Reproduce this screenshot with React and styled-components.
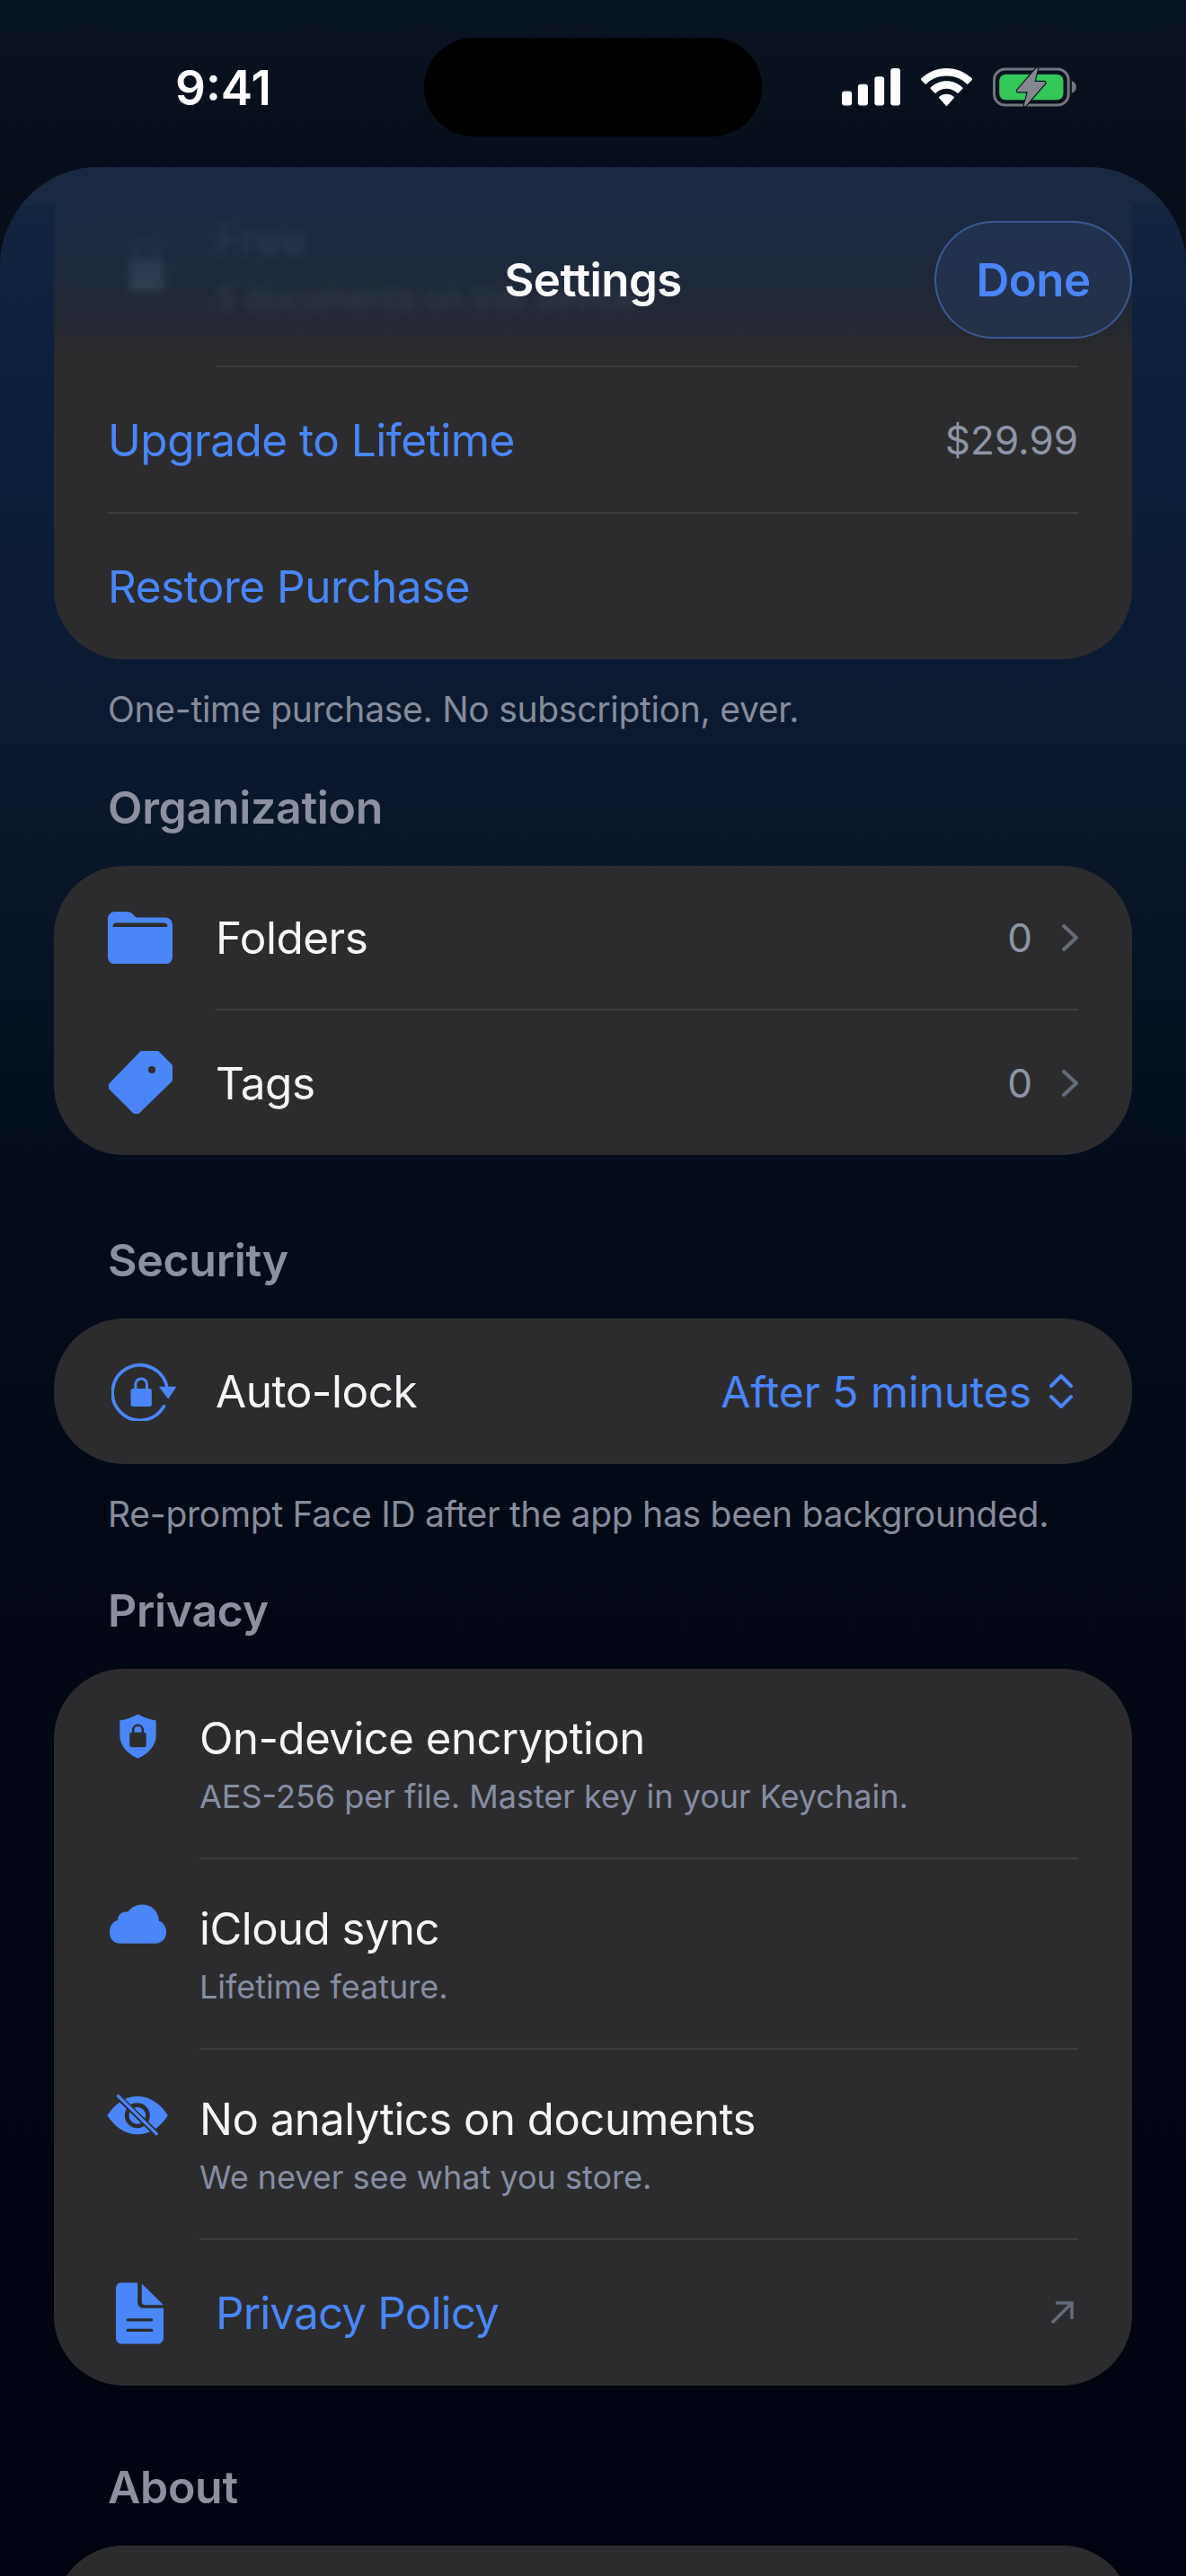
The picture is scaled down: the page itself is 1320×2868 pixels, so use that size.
import styled, { createGlobalStyle } from "styled-components"
import { Fragment } from "react"

const blue = "#4a86f8"
const card = "#2c2c2e"

const GlobalStyle = createGlobalStyle`
  html, body { margin: 0; padding: 0; background: #01040f; }
  * { box-sizing: border-box; }
`

const Page = styled.div`
  position: relative;
  width: 1320px;
  height: 2868px;
  overflow: hidden;
  display: flex;
  flex-direction: column;
  font-family: Inter, "Liberation Sans", sans-serif;
  color: #f5f6f8;
  background: linear-gradient(180deg, #0a1322 0%, #070e1a 6.5%, #060c18 100%);
`
const StatusBar = styled.div`
  position: relative;
  height: 186px;
  flex: none;
  padding: 0 122px 0 195px;
  display: flex;
  justify-content: space-between;
  align-items: flex-start;
`
const Clock = styled.div`
  font-size: 53px;
  font-weight: 600;
  line-height: 60px;
  margin-top: 68px;
  color: #fff;
`
const StatusIcons = styled.div`
  display: flex;
  align-items: center;
  gap: 23px;
  margin-top: 75px;
  svg { display: block; }
`
const Island = styled.div`
  position: absolute;
  left: 472px;
  top: 42px;
  width: 376px;
  height: 110px;
  border-radius: 55px;
  background: #000;
`
const Sheet = styled.div`
  position: relative;
  flex: 1;
  overflow: hidden;
  border-radius: 110px 110px 0 0;
  padding: 42px 60px 0;
  background: linear-gradient(180deg, #142540 0%, #0d1f3d 9%, #0c1b34 20%, #091527 30%, #040c1c 42%, #030814 60%, #01040e 100%);
`
const BlurLayer = styled.div`
  position: absolute;
  left: 60px;
  right: 60px;
  top: 0;
  height: 232px;
  backdrop-filter: blur(5px);
  background: linear-gradient(180deg, rgba(25, 40, 66, 1) 0%, rgba(26, 41, 66, 0.96) 25%, rgba(27, 40, 62, 0.86) 50%, rgba(32, 38, 50, 0.7) 75%, rgba(44, 44, 46, 0) 100%);
  mask-image: linear-gradient(180deg, #000 75%, transparent 100%);
`
const TopTint = styled.div`
  position: absolute;
  left: 0;
  right: 0;
  top: 0;
  height: 42px;
  background: linear-gradient(180deg, #182840, #192842);
`
const Header = styled.div`
  position: absolute;
  left: 0;
  right: 0;
  top: 60px;
  padding: 0 60px;
  display: grid;
  grid-template-columns: 1fr auto 1fr;
  align-items: center;
`
const HeaderTitle = styled.div`
  font-size: 51px;
  font-weight: 600;
  letter-spacing: -0.6px;
  color: #fff;
  grid-column: 2;
`
const DoneButton = styled.div`
  grid-column: 3;
  justify-self: end;
  width: 220px;
  height: 131px;
  border-radius: 66px;
  display: flex;
  align-items: center;
  justify-content: center;
  font-size: 51px;
  font-weight: 600;
  letter-spacing: -0.5px;
  color: ${blue};
  background: rgba(38, 56, 92, 0.55);
  border: 2px solid rgba(76, 124, 210, 0.55);
`
const Card = styled.div`
  background: ${card};
  border-radius: 78px;
  overflow: hidden;
`
const Row = styled.div`
  position: relative;
  height: ${p => p.$h}px;
  display: flex;
  align-items: center;
  padding: 0 60px;
`
const PlanRow = styled(Row)`
  padding-bottom: 48px;
`
const Divider = styled.div`
  height: 2px;
  margin-left: ${p => p.$inset}px;
  margin-right: 60px;
  background: #3e3e40;
`
const IconSlot = styled.div`
  width: ${p => p.$w || 120}px;
  margin-left: ${p => p.$shift || 0}px;
  flex: none;
  display: flex;
  align-items: center;
  svg { display: block; }
`
const RowLabel = styled.div`
  font-size: 49.5px;
  font-weight: 400;
  letter-spacing: ${p => p.$spacing || -0.5}px;
  color: ${p => (p.$link ? blue : "#f5f6f8")};
`
const RowRight = styled.div`
  margin-left: auto;
  display: flex;
  align-items: center;
  gap: ${p => p.$gap || 0}px;
  padding-right: ${p => p.$pad || 0}px;
  font-size: ${p => p.$size || 44}px;
  color: ${p => p.$color || "#8e95a6"};
  svg { display: block; }
`
const TallRow = styled.div`
  height: ${p => p.$h}px;
  display: flex;
  padding: 50px 60px 0;
`
const TallIcon = styled.div`
  width: 66px;
  height: 58px;
  margin-right: 36px;
  flex: none;
  display: flex;
  justify-content: center;
  svg { display: block; flex: none; }
`
const TallTitle = styled.div`
  font-size: 49px;
  line-height: 56px;
  letter-spacing: -0.45px;
  color: #f5f6f8;
`
const TallSub = styled.div`
  font-size: 36px;
  line-height: 44px;
  margin-top: 14px;
  color: #868ea3;
`
const Footnote = styled.div`
  font-size: 39px;
  line-height: 50px;
  letter-spacing: -0.27px;
  margin: 31px 0 0 60px;
  color: #878c9b;
`
const SectionHeading = styled.div`
  font-size: 50px;
  font-weight: 600;
  line-height: 60px;
  letter-spacing: -0.3px;
  margin: ${p => p.$gap}px 0 35px 60px;
  color: #8d90a0;
`
const LastCard = styled(Card)`
  height: 300px;
`

const Signal = () => (
  <svg width="65" height="42" viewBox="112 108 193 124" fill="#fff">
    <rect x="112" y="183" width="33" height="48" rx="9" />
    <rect x="165" y="160" width="33" height="71" rx="9" />
    <rect x="220" y="135" width="32" height="96" rx="9" />
    <rect x="273" y="108" width="32" height="123" rx="9" />
  </svg>
)

const Wifi = () => (
  <svg width="57" height="42" viewBox="375 105 172 127" fill="#fff">
    <path d="M461 105c33 0 63 13 86 35 1 1 1 3 0 4l-14 14c-1 1-3 1-4 0-18-18-42-27-68-27s-50 9-68 27c-1 1-3 1-4 0l-14-14c-1-1-1-3 0-4 23-22 53-35 86-35z" />
    <path d="M461 148c21 0 40 8 54 22 1 1 1 3 0 4l-14 14c-1 1-3 1-4 0-10-9-22-14-36-14s-26 5-36 14c-1 1-3 1-4 0l-14-14c-1-1-1-3 0-4 14-14 33-22 54-22z" />
    <path d="M461 192c10 0 18 3 25 9 1 1 1 3 0 4l-23 26c-1 1-3 1-4 0l-23-26c-1-1-1-3 0-4 7-6 15-9 25-9z" />
  </svg>
)

const Battery = () => (
  <svg width="93" height="44" viewBox="615 102 278 132">
    <rect x="619" y="108" width="248" height="120" rx="36" fill="none" stroke="#73767d" strokeWidth="9" />
    <rect x="636" y="125" width="214" height="86" rx="22" fill="#34c759" />
    <path d="M878 148c9 2 15 10 15 20s-6 18-15 20z" fill="#73767d" />
    <path d="M760 104 696 178c-2 3 0 6 3 6h32l-12 44c-1 4 3 5 5 3l65-75c2-3 0-6-3-6h-32l11-44c1-3-3-4-5-0z" fill="#85878e" stroke="#0a1220" strokeWidth="7" paintOrder="stroke" />
  </svg>
)

const LockIcon = () => (
  <svg width="40" height="60" viewBox="0 0 40 60">
    <path d="M9 24v-9a11 11 0 0 1 22 0v9" fill="none" stroke="#8f98ad" strokeWidth="5" />
    <rect x="0" y="23" width="40" height="37" rx="6" fill="#8f98ad" />
  </svg>
)

const FolderIcon = () => (
  <svg width="72" height="58" viewBox="0 0 72 58">
    <path d="M0 8a8 8 0 0 1 8-8h13c3 0 5 1 7 3l2 2c1 1 2 1.500 4 1.500h30a8 8 0 0 1 8 8v36a8 8 0 0 1-8 8H8a8 8 0 0 1-8-8z" fill={blue} />
    <path d="M5.500 17c0-3 1.500-4.500 4-4.500h53c3 0 4 1.500 4 4.500z" fill={card} />
  </svg>
)

const TagIcon = () => (
  <svg width="72" height="71" viewBox="0 0 72 71">
    <polygon points="38,3 55,3 69,17 69,32 33,67 30,67 4,41 4,38" fill={blue} stroke={blue} strokeWidth="6" strokeLinejoin="round" />
    <circle cx="49" cy="21" r="4" fill={card} />
  </svg>
)

const AutoLockIcon = () => (
  <svg width="73" height="66" viewBox="190 226 218 198">
    <path d="M365 375A92 92 0 1 1 376 316" fill="none" stroke={blue} strokeWidth="11" strokeLinecap="round" />
    <path d="M351 309h53c2 0 2 2 1 3l-24 36c-1 2-3 2-4 0l-27-36c-1-1 0-3 1-3z" fill={blue} />
    <path d="M270 322v-20a19 19 0 0 1 38 0v20" fill="none" stroke={blue} strokeWidth="9" />
    <rect x="254" y="316" width="70" height="60" rx="8" fill={blue} />
  </svg>
)

const ShieldIcon = () => (
  <svg width="41" height="50" viewBox="98 93 124 150">
    <path d="M160 94C180 105 200 112 221 115V165C221 200 195 228 160 243C125 228 99 200 99 165V115C120 112 140 105 160 94Z" fill={blue} />
    <path d="M144 158v-11a16 16 0 0 1 32 0v11" fill="none" stroke={card} strokeWidth="8" />
    <rect x="132" y="155" width="56" height="50" rx="8" fill={card} />
  </svg>
)

const CloudIcon = () => (
  <svg width="63" height="44" viewBox="66 730 188 130">
    <path d="M100 860C80 860 66 845 66 822C66 800 80 785 93 783C93 765 107 752 127 755C138 740 155 731 175 731C205 731 228 752 230 785C245 790 254 805 254 822C254 845 238 860 218 860Z" fill={blue} />
  </svg>
)

const EyeOffIcon = () => (
  <svg width="68" height="46" viewBox="57 57 203 138">
    <path d="M57 127C85 85 120 63 158 63C197 63 235 85 260 127C235 168 197 190 158 190C120 190 85 168 57 127Z" fill={blue} />
    <circle cx="158" cy="127" r="35" fill={blue} stroke={card} strokeWidth="14" />
    <path d="M92 62 222 188" stroke={card} strokeWidth="20" />
    <path d="M94 62 222 188" stroke={blue} strokeWidth="10" strokeLinecap="round" />
  </svg>
)

const DocIcon = () => (
  <svg width="53" height="69" viewBox="87 660 160 206">
    <path d="M105 660H160V725C160 738 168 746 180 746H247V845C247 858 238 866 225 866H109C96 866 87 858 87 845V680C87 668 94 660 105 660Z" fill={blue} />
    <path d="M174 663 247 735H185C178 735 174 731 174 724Z" fill={blue} />
    <path d="M127 785H207M127 820H207" stroke={card} strokeWidth="10" strokeLinecap="round" />
  </svg>
)

const Chevron = () => (
  <svg width="18" height="32" viewBox="0 0 18 32">
    <path d="M2 3 16 16 2 29" fill="none" stroke="#656b7a" strokeWidth="4" strokeLinecap="round" strokeLinejoin="round" />
  </svg>
)

const UpDown = () => (
  <svg width="26" height="38" viewBox="0 0 26 38">
    <path d="M2 13 13 2 24 13M2 25 13 36 24 25" fill="none" stroke={blue} strokeWidth="4" strokeLinecap="round" strokeLinejoin="round" />
  </svg>
)

const ArrowOut = () => (
  <svg width="26" height="26" viewBox="0 0 26 26">
    <path d="M2 24 24 2M6 2H24V20" fill="none" stroke="#656b7a" strokeWidth="3.500" />
  </svg>
)

const orgRows = [
  { label: "Folders", icon: <FolderIcon /> },
  { label: "Tags", icon: <TagIcon /> },
]

const privacyRows = [
  { title: "On-device encryption", sub: "AES-256 per file. Master key in your Keychain.", icon: <ShieldIcon /> },
  { title: "iCloud sync", sub: "Lifetime feature.", icon: <CloudIcon /> },
  { title: "No analytics on documents", sub: "We never see what you store.", icon: <EyeOffIcon /> },
]

const App = () => {
  return (
    <Page>
      <GlobalStyle />
      <StatusBar>
        <Clock>9:41</Clock>
        <StatusIcons>
          <Signal />
          <Wifi />
          <Battery />
        </StatusIcons>
        <Island />
      </StatusBar>
      <Sheet>
        <Card>
          <PlanRow $h={179}>
            <IconSlot $shift={23} $w={97}><LockIcon /></IconSlot>
            <div>
              <RowLabel>Free</RowLabel>
              <TallSub>5 documents on this device</TallSub>
            </div>
          </PlanRow>
          <Divider $inset={180} />
          <Row $h={161}>
            <RowLabel $link>Upgrade to Lifetime</RowLabel>
            <RowRight>$29.99</RowRight>
          </Row>
          <Divider $inset={60} />
          <Row $h={162}>
            <RowLabel $link>Restore Purchase</RowLabel>
          </Row>
        </Card>
        <Footnote>One-time purchase. No subscription, ever.</Footnote>

        <SectionHeading $gap={54}>Organization</SectionHeading>
        <Card>
          {orgRows.map((r, i) => (
            <Fragment key={r.label}>
              {i > 0 && <Divider $inset={180} />}
              <Row $h={i > 0 ? 161 : 159}>
                <IconSlot>{r.icon}</IconSlot>
                <RowLabel>{r.label}</RowLabel>
                <RowRight $gap={33}>0 <Chevron /></RowRight>
              </Row>
            </Fragment>
          ))}
        </Card>

        <SectionHeading $gap={87}>Security</SectionHeading>
        <Card>
          <Row $h={162}>
            <IconSlot $shift={4} $w={116}><AutoLockIcon /></IconSlot>
            <RowLabel>Auto-lock</RowLabel>
            <RowRight $gap={20} $pad={6} $size={48} $color={blue}>After 5 minutes <UpDown /></RowRight>
          </Row>
        </Card>
        <Footnote>Re-prompt Face ID after the app has been backgrounded.</Footnote>

        <SectionHeading $gap={52}>Privacy</SectionHeading>
        <Card>
          {privacyRows.map((r, i) => (
            <Fragment key={r.title}>
              {i > 0 && <Divider $inset={162} />}
              <TallRow $h={210}>
                <TallIcon>{r.icon}</TallIcon>
                <div>
                  <TallTitle>{r.title}</TallTitle>
                  <TallSub>{r.sub}</TallSub>
                </div>
              </TallRow>
            </Fragment>
          ))}
          <Divider $inset={162} />
          <Row $h={162}>
            <IconSlot $shift={9} $w={111}><DocIcon /></IconSlot>
            <RowLabel $link $spacing={-0.9}>Privacy Policy</RowLabel>
            <RowRight $pad={5}><ArrowOut /></RowRight>
          </Row>
        </Card>

        <SectionHeading $gap={83}>About</SectionHeading>
        <LastCard />

        <BlurLayer />
        <TopTint />
        <Header>
          <HeaderTitle>Settings</HeaderTitle>
          <DoneButton>Done</DoneButton>
        </Header>
      </Sheet>
    </Page>
  )
}

export default App
